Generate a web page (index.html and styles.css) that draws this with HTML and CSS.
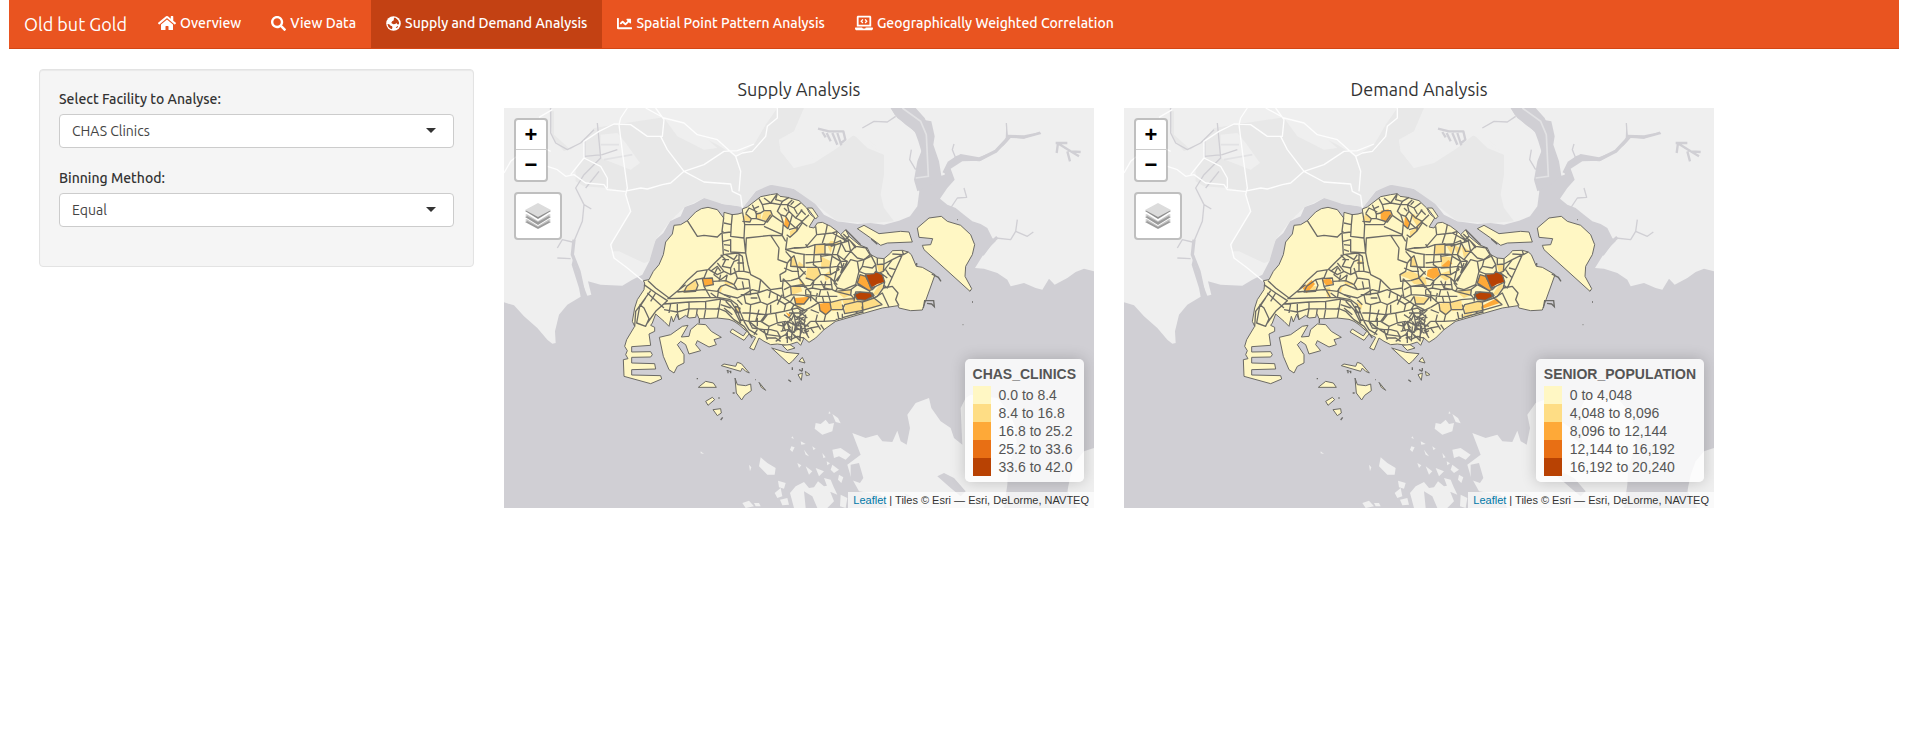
FILE: index.html
```html
<!DOCTYPE html>
<html lang="en">
<head>
<meta charset="utf-8">
<title>Old but Gold</title>
<link rel="stylesheet" href="styles.css">
</head>
<body>
<svg class="defs" aria-hidden="true">
  <defs>
    <g id="basemap">
      <rect width="1770" height="1200" class="sea"/>
      <path class="land" d="M0,0H1160L1172,20 1205,50 1232,70 1243,100 1252,130 1250,165 1238,205 1232,222 1246,250 1240,295 1218,325 1185,338 1140,350 1100,345 1060,348 1000,340 960,320 932,285 905,265 870,243 830,230 785,232 755,250 735,275 718,297 690,292 655,288 630,272 600,270 570,287 542,297 530,325 498,340 478,375 455,395 442,425 436,460 415,500 385,515 355,533 290,530 252,520 262,560 250,563 215,475 210,440 203,470 225,540 230,566 190,590 165,620 153,670 155,705 145,707 130,695 100,660 60,625 30,592 0,583Z"/>
      <path class="urban" d="M135,0L150,10 150,80 200,125 245,90 270,60 345,48 480,28 540,60 640,110 695,145 750,110 785,50 820,0H900L870,70 825,95 830,130 870,180 930,165 1000,120 1050,80 1090,120 1140,140 1140,200 1130,260 1140,300 1170,340 1100,345 1000,340 930,285 870,243 800,230 755,250 718,297 655,288 600,270 542,297 498,340 455,395 436,460 420,465 345,430 320,430 330,390 380,310 365,250 310,240 240,235 215,220 215,185 240,150 240,100 180,130 145,90Z"/>
      <path class="land" d="M290,80L340,75 365,105 408,165 380,185 290,150ZM480,30L540,50 600,85 640,120 600,125 560,105 520,85ZM825,95L885,65 930,70 960,90 1000,85 1050,75 1140,140 1100,100 1040,80 980,130 930,150 870,180 830,130Z"/>
      <path class="land" d="M1195,0L1240,32 1282,40 1292,85 1288,110 1305,160 1312,203 1322,200 1328,170 1352,148 1370,138 1425,148 1470,130 1505,95 1507,45 1510,80 1560,82 1608,72 1612,78 1560,92 1520,90 1500,112 1470,135 1430,158 1375,160 1340,182 1352,215 1330,240 1308,272 1330,290 1355,300 1380,320 1405,340 1430,348 1450,360 1465,390 1475,400 1460,415 1435,445 1413,480 1440,482 1480,495 1510,515 1520,535 1560,525 1595,540 1615,545 1635,512 1652,530 1690,510 1715,492 1740,482 1770,490V0Z"/>
      <path class="sea" d="M1160,0H1235L1262,30 1285,80 1282,110 1298,160 1310,205 1280,230 1240,250 1230,215 1240,160 1256,120 1250,90 1215,55 1180,30Z"/>
      <path class="creek wide" d="M1320,195L1335,165 1360,148 1425,155 1475,130 1505,98 1515,85M1435,440L1460,405 1480,388"/>
      <path class="creek" d="M1510,90L1507,45M1510,85L1560,90 1608,72M1355,150L1345,125 1350,108M1475,390L1520,395 1535,370 1540,335M1535,370L1570,385 1588,372M1075,60L1110,40 1150,42 1175,25M1222,125L1217,155 1235,185M1340,300L1360,270 1388,268 1380,240"/>
      <path class="creek" d="M140,0L140,75 155,105 190,125 230,105 270,65M242,95V145L295,140 340,125M280,45L290,150 240,200M240,200L215,240 240,290 235,340 210,400M240,290L262,303M205,402L175,395 160,420M200,452L160,450M245,240L285,190"/>
      <path class="creek wide" d="M210,395L205,440 225,490 238,550"/>
      <path class="creek mid" d="M942,62L975,70 1018,70 1024,95 1008,108M955,72L965,88M968,75L980,100M985,75L1000,110M1000,75L1012,112M1655,105L1690,105M1665,108L1700,130 1730,132M1690,130L1698,160M1700,130L1725,145M1662,105L1658,135"/>
      <path class="causeway" d="M1195,0L1250,40 1267,80 1273,205 1235,210M300,155L385,140M290,110H345"/>
      <path class="road" d="M105,28L145,5M370,0L350,30 345,50 355,130 370,240 365,260 380,310 320,410 330,450 370,480 418,520M0,195L20,160 70,120 100,110 140,130M130,175L160,185 185,205 210,200 245,225 300,230 310,245 360,250 410,240 430,243 475,230 500,225 540,190 600,170 660,130 700,128 750,108M200,200L240,150 240,100 285,70 330,48 380,50 430,85 475,85 480,35 455,0M425,0L480,30 540,45 580,80 640,95 695,145 715,135 745,130 785,85 790,55 820,30V0M470,85L490,125 540,190 600,222 680,228 685,250 710,262 715,300M695,145L710,190 705,250M240,150L290,175 310,210 310,240"/>
      <g class="land">
        <path d="M1045,975L1085,990 1120,980 1135,1000 1165,1002 1180,968 1190,1000 1208,1010 1218,960 1210,920 1235,885 1275,870 1282,900 1310,940 1340,960 1350,990 1375,1010 1370,900 1385,870 1400,860 1480,870 1515,910 1535,960 1540,1030 1512,1080 1510,1130 1500,1200H1150L1130,1160 1065,1150 1040,1105 1030,1070 1070,1040Z"/>
        <path d="M1700,1100L1715,1060 1740,1030 1770,1020V1200H1720L1690,1150Z"/>
        <path d="M770,1048L790,1065 815,1080 812,1100 790,1100 765,1075ZM590,1030L600,1038 590,1036ZM865,985L870,992 862,990ZM862,1015L872,1018 865,1032 858,1025ZM822,1118L845,1125 840,1142 825,1138ZM812,1155L830,1140 835,1165 820,1170ZM828,1175L850,1170 855,1190 835,1192ZM715,1185L735,1178 750,1195 725,1200ZM858,1155L875,1135 900,1122 915,1140 930,1138 942,1120 960,1135 985,1130 978,1150 990,1180 970,1200H870ZM935,945L950,948 965,935 975,948 990,945 985,970 955,980 932,962ZM985,918L1002,930 1010,946 995,942ZM900,1025L915,1045 905,1040ZM955,1035L965,1048 958,1050ZM985,1070L1005,1085 990,1095 980,1085ZM935,1080L960,1090 945,1105ZM985,1025L1010,1020 1040,1040 1025,1055 1005,1045 990,1050ZM905,1075L925,1090 915,1100ZM880,1065L892,1072 885,1080ZM890,1000L905,1008 892,1010ZM960,1110L980,1115 988,1135 1000,1160 975,1150ZM735,1070L742,1078 738,1090ZM750,1185H765L770,1195H755ZM1005,1100L1018,1108 1012,1125 1002,1115ZM925,1015L935,1022 928,1026ZM1010,1160L1030,1170 1025,1200 1008,1195ZM968,1060L978,1066 970,1072ZM975,910l5,6 -6,2Z"/>
      </g>
      <path class="sea" d="M1040,1070L1065,1065 1078,1110 1068,1125 1040,1115ZM1300,1105L1320,1095 1350,1110 1385,1150 1370,1165 1340,1140ZM1200,1155L1220,1165 1215,1175ZM900,1150L925,1165 940,1200H905ZM1540,1000H1700L1720,1040 1690,1110 1690,1160 1520,1150 1512,1080Z"/>
      <path class="zone" d="M418,518L435,515 448,490 465,470 478,440 485,402 505,378 510,352 530,350 550,338 575,312 592,302 612,298 640,305 659,330 660,313 685,320 702,318 716,314 715,303 730,297 770,266 800,260 820,257 828,265 850,268 885,278 908,300 918,318 932,330 915,357 930,360 940,345 955,343 980,355 1000,370 1010,380 1025,365 1035,385 1065,410 1090,420 1100,440 1120,450 1140,452 1160,435 1165,428 1195,427 1213,432 1222,440 1237,475 1255,478 1293,500 1255,606 1220,608 1185,600 1182,593 1135,600 1075,617 995,640 960,665 935,690 915,703 900,690 890,712 880,702 850,712 820,708 800,710 780,700 765,690 750,726 737,720 755,688 735,678 720,697 678,672 685,663 718,684 728,670 705,650 690,640 675,634 640,630 600,632 585,632 578,615 575,628 555,630 545,622 525,635 518,618 508,642 502,625 495,655 480,640 455,618 445,645 440,652 452,658 452,670 435,678 440,712 383,716V732L440,731 445,740 440,747 383,748V765L452,767 455,783 383,785V801L470,803 473,813 440,827 360,805 358,755 372,752 365,740 370,728 362,715 368,695 380,675 392,655 385,640 392,600 400,575 420,545 422,525Z"/>
      <path class="zone" d="M466,688L500,680 535,655 552,652 532,687 555,685 560,665 580,648 605,650 622,670 652,688 630,695 637,710 615,717 580,698 575,710 590,728 555,738 545,710 530,700 520,710 540,740 540,765 520,775 510,795 495,785 478,745ZM652,773L660,768 695,775 700,763 712,767 736,795 725,790 715,780 710,790ZM583,838L605,820 628,825 637,838ZM693,810L700,830 725,833 740,828 742,848 722,862 713,876 697,855ZM765,823L785,847 772,838ZM605,880L625,868 632,875 612,892ZM627,905L650,902 652,915 640,923ZM803,720L845,733 885,737 865,760 855,768ZM835,712L858,710 873,720 850,727ZM885,760L895,748 903,765ZM882,800L895,795 892,817ZM904,790L918,800 907,803ZM1060,362L1080,352 1125,377 1190,370 1215,372 1225,402 1150,405 1130,412 1100,390ZM910,300L925,300 942,325 935,333ZM1240,360L1275,330 1312,325 1330,340 1370,352 1400,380 1412,410 1405,440 1385,475 1383,505 1403,542 1398,550 1260,425 1255,412 1280,410 1286,392 1245,388Z"/>
      <path class="speck" d="M668,788h4v8M676,790h4v6M578,812h4M643,870h4M650,936l6-8M686,855h6M754,815h2M853,815l8,6M865,778v8M885,785l10,5M895,780v8M1102,393l18,16M1360,335h2M1404,582h3M1376,650h2M1283,498l20,10 8,12M1258,600l4,-22 27,0 2,18 -8,-8 -14,-2M1238,465v8M586,632v14"/>
    </g>
    <g id="borders" class="borders">
      <path d="M550,338L580,385 600,382 640,387 658,370M659,330L654,370 658,440 635,462 612,485 580,490 552,515 525,545 495,570 455,540 432,518M420,530L455,555 490,578 455,610 430,645M440,548L395,610 392,655M408,590L398,645 425,655 435,632 420,600ZM430,555L480,600M425,570L405,600M455,555L440,580M490,572L560,570 640,568 680,575M480,588L555,582 605,580 650,573M480,605L520,612 555,602 645,603M520,585V612L525,635M555,582V602L550,628M605,580V603L600,632M650,573L640,630M500,588L495,615M580,602L578,615M520,552L600,545 640,550 680,570M610,485L600,510 575,515 582,532 575,550 540,552 548,535 575,515M525,545L545,530M595,512L625,510 628,530 600,535ZM600,535L620,570M615,485L640,500 660,490M628,520L665,518 690,530M640,550L650,535 665,530 700,545 735,540M645,540L640,570"/>
      <path d="M660,345L682,350 685,318M682,350L680,385 720,390 722,350M657,375L680,372M657,400L680,395 680,432 725,435 727,390 800,382 835,383 845,400M722,350L760,350 780,350 800,320M716,314L722,350M720,390L725,435 732,470 740,500 770,515 800,545 835,540 838,512M658,440L700,435 715,445 720,490 740,495M800,382L825,420 822,455 850,465 845,490 828,500 830,520 860,518M650,440L665,455 655,475 680,480 690,460 705,455M640,465L660,490 680,500 700,490 720,490M665,440L690,455 700,440M640,480L630,500 650,515 670,500M690,480L700,510 735,515M670,500L665,520M700,510L690,530 700,545M660,410L680,412M660,425L675,430M655,455H675M700,465L720,465M705,440V490M680,480V500M620,490L640,475 650,490M735,515L740,560 710,560M715,520L720,545M650,500L645,520"/>
      <path d="M725,317L742,332 738,342 715,340M742,332L757,332 757,318 770,315 780,308 800,308 805,322 790,342 757,332M725,317L735,300 760,312M745,290L757,318M765,272L775,290 800,285 830,290M775,290L780,308M800,285L820,257M780,270L800,285M805,322L838,345 835,380 780,355M838,345L830,320 845,325 858,345 852,362 838,350M830,290L820,310 830,320M830,290L850,290 855,310 845,325M850,290L865,275M850,290L870,300 890,285M855,310L875,330 895,305M870,300L880,318M865,320L858,345 875,360 895,340M875,330L895,340 915,320M890,340L910,355M855,365L880,358 878,370 858,388 848,380M895,345L878,370M820,257L815,275 835,280 855,268M835,280L830,290M850,388L845,425 870,420 905,418M840,300L850,310M860,290L870,280M890,305L905,320M750,302L765,295"/>
      <path d="M650,573L680,580 700,610 710,635 735,640 745,660 780,665 790,695M680,575L700,590 720,640M665,580L690,605 710,645M640,600L665,610 690,635M650,590L680,600M660,560L700,570 720,560 745,545 765,550M695,595L708,600 705,615 695,612ZM720,560L725,585 740,590 738,615 715,615M740,590L770,582 790,590 785,620 738,615M725,560L760,555 770,582M760,555L790,545 820,560 840,570M790,590L820,575 820,560M785,620L815,615 840,610 845,590 820,575M738,615L735,640 770,640 785,620M770,640L795,655 820,645 815,615M735,640L760,660M745,650L790,680 830,685M795,655L790,680M720,640L735,665 760,680M760,630V655M690,635L720,655 745,690M770,515L765,550M800,545L795,570M740,570L760,570M820,645L845,640 860,660M780,665L800,665 820,670M765,605L755,640M800,590V615M775,640L790,620M660,600L685,620M700,575L715,590M620,555L640,570M790,690L815,690 830,700M750,680L760,665M705,640L720,635"/>
      <path d="M838,512L860,535 895,530 905,540M840,545L860,535 862,560 840,570M862,560L900,562 917,567 900,588 875,588 870,565M835,540L840,570 870,590 862,605 840,610M870,590L900,605 885,610M905,490L885,510 900,530M862,535H895M860,475L905,478M862,450L870,443 880,475 860,475ZM850,465L862,450 845,430M845,425L875,435 905,440M880,475L885,510M900,440V478M860,518L885,510M887,480L905,500M835,560L820,590M870,565L860,580 840,590M860,605L880,600 895,610 920,598M840,480L865,490 885,490"/>
      <path d="M820,650L840,655 850,640 870,650 890,640 905,655 920,640M830,670L850,665 865,675 880,660 900,675 915,668M840,620L855,630 865,615 880,630 895,618 910,630M825,690L845,680 860,695 880,685 900,690M850,640L855,665 845,680M870,615L875,650 870,675M890,610L885,640 895,665 885,690M905,620L900,650 910,680M860,630L850,650M880,640L875,670M865,650L895,655M855,660L875,690M842,640L835,670M880,625L905,640M895,630L880,655M870,680L890,700M862,600L870,620 860,640M820,670L830,690 815,700M835,645L845,670M850,675V705M865,640L880,665 905,660M900,665L915,690M855,615H900L910,605M875,635L900,628M885,645L915,655M845,690L865,685M865,655L862,700M890,655L888,700"/>
      <path d="M920,598L945,583 978,583 982,605 965,620 948,608 945,587M945,587L920,565M982,605L1015,605 1022,590 1062,580 1075,582 1077,607 1022,617 1015,590M980,583L1012,575 1050,572 1042,562 995,550M995,550L1042,545 1040,562M1075,582L1110,570 1135,590M1075,607L1135,590M1077,615L1074,595M1050,580L1055,552 1070,552M1110,570L1135,555 1155,598M920,640L960,640 995,638M940,620L935,640 950,665M965,620L960,640M1000,612L1005,635M995,635L1075,612M1015,617V632M920,660L945,655M930,675L920,660 905,665M950,650L960,665M920,605L945,615M1055,618L1060,610"/>
      <path d="M905,418L938,380 935,355M870,420L905,418M905,408L910,418 933,410 985,408M933,410L928,470 940,478M933,410L963,408 963,438 933,440M963,412L993,410 985,440 963,438M985,408L1010,398 1012,405 980,415M940,380L985,375 1030,400M970,350L965,375 955,405M985,375L1000,370M1000,370L990,405M1010,380L1030,400 1012,405 1000,440 985,440M1030,385L1040,430M1025,365L1070,410M1018,378L1055,415M1035,385L1020,400M1040,400L1055,420M1040,430L1055,415 1090,420M1040,430L1060,450 1080,455 1098,440 1085,420M1012,405L1025,430 1040,430M1000,440L1020,455 1040,430M1020,455L1030,460"/>
      <path d="M905,440H950L952,460 905,465M905,478H942L950,500 930,518 905,510M950,445L985,440 978,478 950,480M985,445L1010,460 1000,475 978,478M942,478L978,478 980,500 960,500 950,500M980,500L1005,485 1000,475M980,510L985,545 960,540 950,518M960,500L980,510 1000,530M930,518L920,532 888,535M905,545L925,540 950,545 980,545M905,560L945,565 950,545M925,540L930,518M925,530L985,530M965,520L960,545M1000,440L1010,460 1030,460 1000,520M1010,500L1040,455 1060,460 1065,490 1055,530 1020,545 1000,540 990,525ZM1000,475L1020,480M1060,460L1080,455M1000,480L990,520M985,545L995,550 1000,540M1040,545L1060,530M920,550V580M940,555L935,580M905,545V560M900,530L920,555M955,565L960,585M970,550L980,583M945,565H1000M1010,460L1015,480M1020,465L1010,495"/>
      <path d="M1080,455L1075,475 1065,490M1080,455L1100,445M1100,440L1115,470 1118,495M1075,475L1105,480 1115,470M1085,498L1110,497 1115,490 1135,500 1142,522 1115,535 1100,540ZM1068,500L1085,505 1105,545 1095,548 1060,525ZM1065,490L1085,498M1118,470L1140,468 1138,490 1125,495M1120,450V468M1140,452V468M1138,490L1165,455 1195,440 1150,540 1138,530M1165,455L1140,468M1155,480L1175,485M1150,495L1165,510M1145,485L1155,500M1195,427L1198,440 1165,438M1213,432L1198,440M1142,522L1138,540 1120,565 1110,570M1138,540L1165,535 1182,555 1175,575 1185,593M1105,545L1115,535M1095,548L1110,570M1050,560L1070,552 1105,555 1110,563 1085,577 1060,575ZM1060,530L1095,548M1130,495L1150,510"/>
    </g>
    <g id="layers-icon">
      <path fill="#9b9b9b" d="M0 19l13-6 13 6-13 7z"/><path fill="#c4c4c4" d="M0 17l13-6 13 6-13 7z"/>
      <path fill="#fff" d="M0 15l13-6 13 6-13 8z"/><path fill="#9b9b9b" d="M0 14l13-6 13 6-13 8z"/><path fill="#c8c8c8" d="M0 12l13-6 13 6-13 7z"/>
      <path fill="#fff" d="M0 10l13-7 13 7-13 8z"/><path fill="#8f8f8f" d="M0 8l13-7 13 7-13 8z"/><path fill="#dcdcdc" d="M0 7l13-7 13 7-13 7z"/>
    </g>
  </defs>
</svg>

<nav class="navbar">
  <a class="brand" href="#">Old but Gold</a>
  <ul class="nav">
    <li><a href="#"><svg class="icon i18" viewBox="0 0 576 512"><path d="M280.37 148.26L96 300.11V464a16 16 0 0 0 16 16l112.06-.29a16 16 0 0 0 15.92-16V368a16 16 0 0 1 16-16h64a16 16 0 0 1 16 16v95.64a16 16 0 0 0 16 16.05L464 480a16 16 0 0 0 16-16V300L295.67 148.26a12.19 12.19 0 0 0-15.3 0zM571.6 251.47L488 182.56V44.05a12 12 0 0 0-12-12h-56a12 12 0 0 0-12 12v72.61L318.47 43a48 48 0 0 0-61 0L4.34 251.47a12 12 0 0 0-1.6 16.9l25.5 31A12 12 0 0 0 45.15 301l235.22-193.74a12.19 12.19 0 0 1 15.3 0L530.9 301a12 12 0 0 0 16.9-1.6l25.5-31a12 12 0 0 0-1.7-16.93z"/></svg>Overview</a></li>
    <li><a href="#"><svg class="icon" viewBox="0 0 512 512"><path d="M505 442.7L405.3 343c-4.5-4.5-10.6-7-17-7H372c27.6-35.3 44-79.7 44-128C416 93.1 322.9 0 208 0S0 93.1 0 208s93.1 208 208 208c48.3 0 92.7-16.4 128-44v16.3c0 6.4 2.5 12.5 7 17l99.7 99.7c9.4 9.4 24.6 9.4 33.9 0l28.3-28.3c9.4-9.4 9.4-24.6.1-34zM208 336c-70.7 0-128-57.2-128-128 0-70.7 57.2-128 128-128 70.7 0 128 57.2 128 128 0 70.7-57.2 128-128 128z"/></svg>View Data</a></li>
    <li><a class="active" href="#"><svg class="icon" viewBox="0 0 512 512"><circle cx="256" cy="256" r="248"/><path class="cut" d="M270 60l50 0 50 40 50 50 30 90-20 50-50-10-20-40-50 30-60 10-70-40 30-60 50-30 10-50zM50 270l60 10 50 50 50 20 10 60-30 40-60-30-50-50zM330 400l60-60 25 15-40 55z"/></svg>Supply and Demand Analysis</a></li>
    <li><a href="#"><svg class="icon" viewBox="0 0 512 512"><path d="M496 384H64V80c0-8.84-7.16-16-16-16H16C7.16 64 0 71.16 0 80v336c0 17.67 14.33 32 32 32h464c8.84 0 16-7.16 16-16v-32c0-8.84-7.16-16-16-16zM464 96H345.94c-21.38 0-32.09 25.85-16.97 40.97l32.4 32.4L288 242.75l-73.37-73.37c-12.5-12.5-32.76-12.5-45.25 0l-68.69 68.69c-6.25 6.25-6.25 16.38 0 22.63l22.62 22.62c6.25 6.25 16.38 6.25 22.63 0L192 237.25l73.37 73.37c12.5 12.5 32.76 12.5 45.25 0l96-96 32.4 32.4c15.12 15.12 40.97 4.41 40.97-16.97V112c.01-8.84-7.15-16-15.99-16z"/></svg>Spatial Point Pattern Analysis</a></li>
    <li><a href="#"><svg class="icon i18" viewBox="0 0 640 512"><path d="M255.03 261.65c6.25 6.25 16.38 6.25 22.63 0l11.31-11.31c6.25-6.25 6.25-16.38 0-22.63L253.25 192l35.71-35.72c6.25-6.25 6.25-16.38 0-22.63l-11.31-11.31c-6.25-6.25-16.38-6.25-22.63 0l-58.34 58.34c-6.25 6.25-6.25 16.38 0 22.63l58.35 58.34zm96.01-11.3l11.31 11.31c6.25 6.25 16.38 6.25 22.63 0l58.34-58.34c6.25-6.25 6.25-16.38 0-22.63l-58.34-58.34c-6.25-6.25-16.38-6.25-22.63 0l-11.31 11.31c-6.25 6.25-6.25 16.38 0 22.63L386.75 192l-35.71 35.72c-6.25 6.25-6.25 16.38 0 22.63zM624 416H381.54c-.74 19.81-14.71 32-32.74 32H288c-18.69 0-33.02-17.47-32.77-32H16c-8.8 0-16 7.2-16 16v16c0 35.2 28.8 64 64 64h512c35.2 0 64-28.8 64-64v-16c0-8.8-7.2-16-16-16zM576 48c0-26.4-21.6-48-48-48H112C85.6 0 64 21.6 64 48v336h512V48zm-64 272H128V64h384v256z"/></svg>Geographically Weighted Correlation</a></li>
  </ul>
</nav>

<main class="layout">
  <form class="well">
    <div class="field">
      <label for="facility">Select Facility to Analyse:</label>
      <div class="select"><select id="facility"><option>CHAS Clinics</option></select></div>
    </div>
    <div class="field">
      <label for="binning">Binning Method:</label>
      <div class="select"><select id="binning"><option>Equal</option></select></div>
    </div>
  </form>

  <section class="panel">
    <h2>Supply Analysis</h2>
    <div class="map">
      <svg class="canvas" viewBox="0 0 1770 1200" preserveAspectRatio="xMidYMid slice" role="img" aria-label="Supply map">
        <use href="#basemap"/>
        <path class="c2" d="M715,335L725,317 742,330 738,342ZM757,318L772,315 770,335 757,332ZM780,308L800,308 805,322 790,340 772,333ZM858,370L880,358 878,370 858,388ZM862,450L870,443 880,475 860,475ZM885,460L905,478H880ZM535,548L570,515 582,532 575,550 540,555ZM660,520L685,523 690,530 665,532ZM645,540L657,532 650,555ZM695,597L708,600 705,615 695,612ZM862,535H890L895,550 865,560ZM870,590L895,588 885,605ZM933,412L963,410V436L933,438ZM970,412L980,398 1012,405 985,415 980,435ZM950,445L980,460 975,478H952ZM910,478L942,478 948,500 930,518 905,510ZM960,500L980,487V510L965,518ZM885,510L905,530H888ZM995,550L1042,545 1040,562 1020,570ZM1015,575L1050,565 1065,580 1020,590ZM1022,590L1075,580 1077,607 1022,617ZM1075,582L1110,570 1130,590 1077,607ZM1105,560L1132,522 1138,535 1120,560ZM1118,470L1140,468 1138,490 1125,495ZM980,583L1012,577 1015,605 985,610Z"/>
        <path class="c3" d="M595,512L625,510 628,530 600,535ZM845,325L858,345 852,362 840,350ZM1068,500L1085,505 1105,545 1095,548 1060,525ZM945,587L978,583 982,605 965,620 948,608ZM870,570L917,566 900,588 875,588ZM845,613L860,620 855,628Z"/>
        <path class="c5" d="M1082,500L1110,497 1115,490 1135,500 1142,522 1120,528 1100,540ZM1050,560L1070,552 1105,555 1110,563 1085,577 1060,575Z"/>
        <use href="#borders"/>
      </svg>
      <div class="controls">
        <div class="zoom"><button type="button" aria-label="Zoom in">+</button><button type="button" aria-label="Zoom out">−</button></div>
        <button type="button" class="layers" aria-label="Layers"><svg viewBox="0 0 26 26"><use href="#layers-icon"/></svg></button>
      </div>
      <div class="corner">
        <div class="legend">
          <strong>CHAS_CLINICS</strong>
          <ul><li class="b1">0.0 to 8.4</li><li class="b2">8.4 to 16.8</li><li class="b3">16.8 to 25.2</li><li class="b4">25.2 to 33.6</li><li class="b5">33.6 to 42.0</li></ul>
        </div>
        <div class="credit"><a href="#">Leaflet</a> | Tiles © Esri — Esri, DeLorme, NAVTEQ</div>
      </div>
    </div>
  </section>

  <section class="panel">
    <h2>Demand Analysis</h2>
    <div class="map">
      <svg class="canvas" viewBox="0 0 1770 1200" preserveAspectRatio="xMidYMid slice" role="img" aria-label="Demand map">
        <use href="#basemap"/>
        <path class="c2" d="M715,335L725,317 742,330 738,342ZM858,320L870,318 895,345 885,362 870,340ZM858,370L880,358 878,370 858,388ZM862,450L870,443 880,475 860,475ZM823,500L860,488 905,510 908,530 870,528 855,512ZM933,412L963,410V436L933,438ZM968,415L988,412 983,440ZM988,412L1012,420 1003,445ZM1012,412L1038,430 1020,450ZM950,445L985,448 978,478H952ZM940,500L980,487V510L965,518ZM1118,470L1140,468 1138,490 1125,495ZM995,550L1042,545 1040,562 1020,570ZM1022,590L1075,580 1077,607 1022,617ZM945,587L978,583 982,605 965,620 948,608ZM980,583L1012,577 1015,605 985,610ZM870,565L917,570 900,588 875,586ZM1000,625L1045,615 1040,625ZM1105,560L1132,522 1138,535 1120,560ZM605,540L618,538 620,570 610,572ZM645,540L657,532 650,555ZM698,455L715,460 705,475ZM695,580L715,590 712,605ZM660,520L685,523 690,530 665,532ZM550,535H578L570,552H545Z"/>
        <path class="c3" d="M770,308L793,304 805,321 788,341 770,334ZM843,325L858,345 852,362 840,350ZM911,486L938,476 948,501 928,514 908,504ZM953,474L973,456 985,466 968,481ZM1068,500L1085,505 1105,545 1095,548 1060,525ZM1073,594L1118,571 1130,584 1080,601ZM536,541L563,516 573,528 548,556ZM593,516L618,511 628,526 608,534Z"/>
        <path class="c5" d="M1082,500L1110,497 1115,490 1135,500 1142,522 1120,528 1100,540ZM1050,560L1070,552 1105,555 1110,563 1085,577 1060,575Z"/>
        <use href="#borders"/>
      </svg>
      <div class="controls">
        <div class="zoom"><button type="button" aria-label="Zoom in">+</button><button type="button" aria-label="Zoom out">−</button></div>
        <button type="button" class="layers" aria-label="Layers"><svg viewBox="0 0 26 26"><use href="#layers-icon"/></svg></button>
      </div>
      <div class="corner">
        <div class="legend">
          <strong>SENIOR_POPULATION</strong>
          <ul><li class="b1">0 to 4,048</li><li class="b2">4,048 to 8,096</li><li class="b3">8,096 to 12,144</li><li class="b4">12,144 to 16,192</li><li class="b5">16,192 to 20,240</li></ul>
        </div>
        <div class="credit"><a href="#">Leaflet</a> | Tiles © Esri — Esri, DeLorme, NAVTEQ</div>
      </div>
    </div>
  </section>
</main>
</body>
</html>
```
FILE: styles.css
```css
* { box-sizing: border-box; }
body {
  margin: 0;
  padding: 0 14px 0 9px;
  font: 14px/20px Ubuntu, Lato, sans-serif;
  color: #333;
  background: #fff;
}
.defs { position: absolute; width: 0; height: 0; }

.navbar {
  display: flex;
  background: #e95420;
  border-bottom: 1px solid #d34615;
}
.navbar a { color: #fff; text-decoration: none; white-space: nowrap; }
.brand { padding: 14px 16px 14px 15px; font-size: 18px; }
.nav { display: flex; margin: 0; padding: 0; list-style: none; }
.nav a { display: flex; align-items: center; gap: 4px; height: 48px; padding: 0 15px 2px; font-weight: 500; }
.nav a.active { background: #c34113; }
.icon { width: 15px; height: 15px; fill: #fff; flex: none; }
.icon.i18 { width: 18px; height: 16px; }
.icon .cut { fill: #c34113; }

.layout {
  display: grid;
  grid-template-columns: 3fr 4fr 4fr 1fr;
  padding: 20px 15px;
  align-items: start;
}
.well {
  margin: 0 15px;
  padding: 19px;
  background: #f5f5f5;
  border: 1px solid #e3e3e3;
  border-radius: 4px;
  box-shadow: inset 0 1px 1px rgba(0, 0, 0, .05);
}
.field { margin-bottom: 20px; }
.field label { display: block; margin-bottom: 5px; font-weight: 500; }
.select { position: relative; }
.select::after {
  content: "";
  position: absolute;
  right: 18px;
  top: 14px;
  border: 5px solid transparent;
  border-top-color: #333;
  border-bottom: 0;
  pointer-events: none;
}
.select select {
  display: block;
  width: 100%;
  height: 34px;
  padding: 0 12px;
  font: inherit;
  color: #444;
  background: #fff;
  border: 1px solid #ccc;
  border-radius: 4px;
  appearance: none;
}

.panel { padding: 0 15px; }
.panel h2 { margin: 0; padding: 10px 0 9px; font-size: 18px; line-height: 20px; font-weight: 400; text-align: center; }
.map { position: relative; overflow: hidden; font: 14px/18px "Liberation Sans", Arial, sans-serif; }
.canvas { display: block; width: 100%; height: 400px; }
.sea { fill: #d0cfd4; }
.land { fill: #efefef; }
.urban { fill: #e8e8e8; }
.creek { fill: none; stroke: #d0cfd4; stroke-width: 4; stroke-linejoin: round; }
.creek.mid { stroke-width: 7; }
.creek.wide { stroke-width: 10; }
.causeway { fill: none; stroke: #e2e2e4; stroke-width: 5; }
.road { fill: none; stroke: #fdfdfd; stroke-width: 4; stroke-linejoin: round; }
.zone { fill: #fff7c4; stroke: #6b6a66; stroke-width: 3; stroke-linejoin: round; }
.speck { fill: none; stroke: #6b6a66; stroke-width: 4; }
.borders { fill: none; stroke: #6b6a66; stroke-width: 4; stroke-linejoin: round; }
.c2 { fill: #fedd85; }
.c3 { fill: #fea938; }
.c5 { fill: #b84203; }

.controls { position: absolute; top: 10px; left: 10px; display: flex; flex-direction: column; align-items: flex-start; gap: 10px; }
.zoom, .layers { border: 2px solid rgba(0, 0, 0, .2); border-radius: 4px; background: #fff; background-clip: padding-box; }
.zoom { display: flex; flex-direction: column; }
.zoom button {
  width: 30px;
  height: 30px;
  padding: 0;
  border: 0;
  background: none;
  color: #000;
  font: bold 22px/30px "Liberation Sans", Arial, sans-serif;
}
.zoom button:first-child { border-bottom: 1px solid #ccc; }
.layers { display: grid; place-items: center; width: 48px; height: 48px; padding: 0; }
.layers svg { width: 26px; height: 26px; }

.corner { position: absolute; right: 0; bottom: 0; display: flex; flex-direction: column; align-items: flex-end; gap: 10px; }
.legend {
  margin-right: 10px;
  padding: 6px 8px;
  color: #555;
  background: rgba(255, 255, 255, .8);
  border-radius: 5px;
  box-shadow: 0 0 15px rgba(0, 0, 0, .2);
}
.legend strong { display: block; margin-bottom: 3px; }
.legend ul { margin: 0; padding: 0; list-style: none; }
.legend li { display: flex; gap: 8px; }
.legend li::before { content: ""; width: 18px; height: 18px; }
.b1::before { background: #fff7c4; }
.b2::before { background: #fedd85; }
.b3::before { background: #fea938; }
.b4::before { background: #e86f14; }
.b5::before { background: #b84203; }
.credit { padding: 0 5px; font-size: 11px; line-height: 16px; background: rgba(255, 255, 255, .7); }
.credit a { color: #0078a8; text-decoration: none; }
```
